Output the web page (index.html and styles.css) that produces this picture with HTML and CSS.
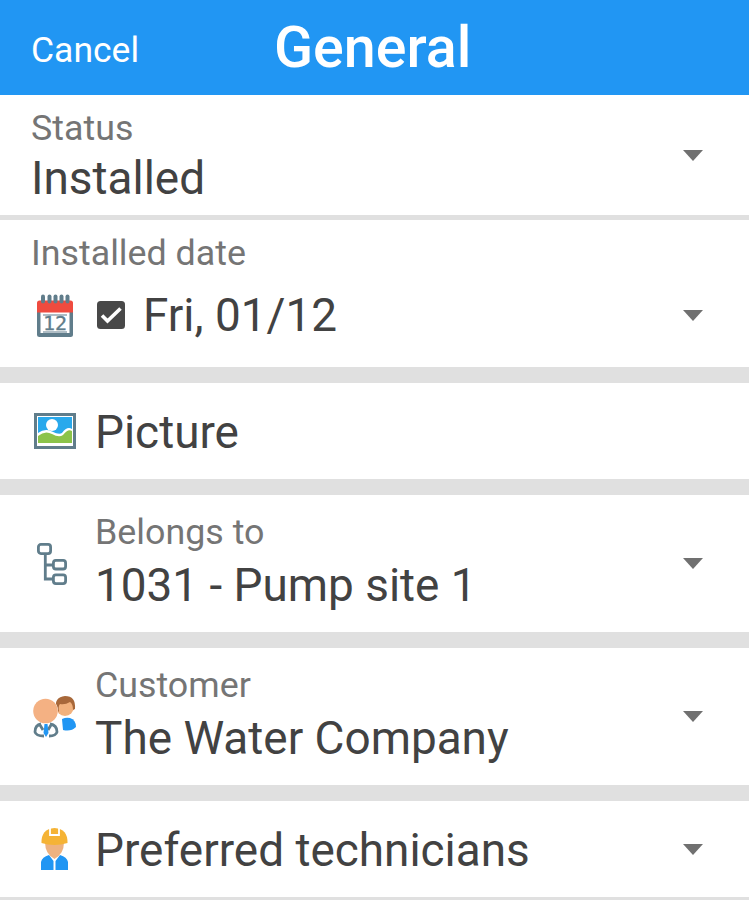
FILE: index.html
```html
<!DOCTYPE html>
<html lang="en">
<head>
<meta charset="utf-8">
<title>General</title>
<link rel="stylesheet" href="styles.css">
</head>
<body>
<header class="topbar">
  <span class="cancel">Cancel</span>
  <h1 class="title">General</h1>
</header>
<main class="form">
  <section class="row row-status">
    <div class="field">
      <div class="label">Status</div>
      <div class="value">Installed</div>
    </div>
    <span class="caret"></span>
  </section>
  <section class="row row-date">
    <div class="field">
      <div class="label">Installed date</div>
      <div class="date-line">
        <svg class="icon icon-cal" viewBox="0 0 36 43" width="36" height="43">
          <rect x="0" y="8" width="36" height="35" rx="2.500" fill="#607d8b"/>
          <rect x="3.500" y="18" width="29" height="21" fill="#fff"/>
          <path d="M0 18.500V9Q0 6.500 2.500 6.500H33.500Q36 6.500 36 9V18.500Z" fill="#ef4b3f"/>
          <g fill="#607d8b">
            <rect x="4" y="0.500" width="4" height="9" rx="2"/>
            <rect x="10.500" y="0.500" width="4" height="9" rx="2"/>
            <rect x="16.500" y="0.500" width="4" height="9" rx="2"/>
            <rect x="22.500" y="0.500" width="4" height="9" rx="2"/>
            <rect x="28.500" y="0.500" width="4" height="9" rx="2"/>
          </g>
          <path d="M6 21H30M6 38H30" stroke="#607d8b" stroke-width="1.200" fill="none"/>
          <text class="cal-num" x="18" y="36" text-anchor="middle">12</text>
        </svg>
        <svg class="check" viewBox="0 0 28 28" width="28" height="28">
          <rect width="28" height="28" rx="3.500" fill="#484848"/>
          <path d="M5 14.500L10.500 20L23.500 7.500" stroke="#fff" stroke-width="3.600" fill="none"/>
        </svg>
        <span class="value">Fri, 01/12</span>
        <span class="caret"></span>
      </div>
    </div>
  </section>
  <section class="row row-picture">
    <svg class="icon" viewBox="0 0 42 36" width="42" height="36">
      <rect width="42" height="36" fill="#607d8b"/>
      <rect x="3" y="3" width="36" height="30" fill="#fff"/>
      <rect x="4" y="4" width="34" height="26" fill="#29a9ec"/>
      <circle cx="18" cy="12" r="6" fill="#fff"/>
      <path d="M4 20Q11 15 18 18.500T28 20Q33 13 38 16V32H4Z" fill="#fff"/>
      <path d="M4 23Q11 17 18 21T29 22Q34 15.500 38 18V30H4Z" fill="#8bc34a"/>
    </svg>
    <div class="value">Picture</div>
  </section>
  <section class="row row-belongs">
    <svg class="icon" viewBox="0 0 30 42" width="30" height="42">
      <g fill="none" stroke="#607d8b" stroke-width="2.800">
        <path d="M8.300 11V36H16M8.300 22H16"/>
        <rect x="1.400" y="1.400" width="12.200" height="9.200" rx="2.500"/>
        <rect x="16.400" y="17.400" width="12.200" height="8.600" rx="2.500"/>
        <rect x="16.400" y="31.800" width="12.200" height="8.800" rx="2.500"/>
      </g>
    </svg>
    <div class="field">
      <div class="label">Belongs to</div>
      <div class="value">1031 - Pump site 1</div>
    </div>
    <span class="caret"></span>
  </section>
  <section class="row row-customer">
    <svg class="icon" viewBox="0 0 44 42" width="44" height="42">
      <path d="M29 23Q33 21 37 22Q43 24 43 31Q38 36 30 34Z" fill="#2196f3"/>
      <circle cx="32" cy="11" r="9" fill="#f2b27e"/>
      <path d="M23 13Q21 1 32 0Q43 0 42 13L40 14Q40 8 37 6Q32 9 27 8Q25 10 26 16Z" fill="#a8683a"/>
      <circle cx="12" cy="15" r="13" fill="#fff"/>
      <circle cx="12.500" cy="15" r="12.300" fill="#f4b183"/>
      <path d="M8 28Q2 29 2 36Q3 40 11 40M17 28Q24 29 24 36Q23 40 16 40M7 29L10 34M18 29L15 34" fill="none" stroke="#607d8b" stroke-width="2.800"/>
      <path d="M11.500 28H14.500L15.500 37L13 41L10.500 37Z" fill="#2196f3"/>
    </svg>
    <div class="field">
      <div class="label">Customer</div>
      <div class="value">The Water Company</div>
    </div>
    <span class="caret"></span>
  </section>
  <section class="row row-tech">
    <svg class="icon" viewBox="0 0 28 42" width="28" height="42">
      <path d="M0 42V34Q1 29 8 27L12.500 33V42ZM27 42V34Q26 29 19 27L14.500 33V42Z" fill="#2196f3"/>
      <path d="M4 14H23Q23 26 13.500 31Q4 26 4 14Z" fill="#eeb27f"/>
      <path d="M0.500 15Q0 1 13.500 0Q27 1 26.500 15Q13.500 19 0.500 15Z" fill="#f5b335"/>
      <path d="M9 0V7H18V0" stroke="#fff" stroke-width="1.800" fill="none"/>
    </svg>
    <div class="value">Preferred technicians</div>
    <span class="caret"></span>
  </section>
</main>
</body>
</html>
```

FILE: styles.css
```css
* { box-sizing: border-box; }
html, body { margin: 0; padding: 0; }
body {
  width: 749px;
  height: 900px;
  overflow: hidden;
  background: #e0e0e0;
  font-family: Roboto, sans-serif;
  color: #424242;
}
.topbar {
  height: 95px;
  background: #2196f3;
  color: #fff;
  display: flex;
  align-items: center;
  padding-left: 31px;
}
.cancel { font-size: 35.500px; width: 243px; padding-top: 4px; }
.title { margin: 0; font-size: 57.400px; font-weight: 500; line-height: 1; }
.form { display: flex; flex-direction: column; }
.row {
  background: #fff;
  display: flex;
  align-items: center;
  padding-left: 31px;
  padding-right: 46px;
}
.row-status { height: 120px; margin-bottom: 5px; }
.row-date { height: 147px; margin-bottom: 16px; align-items: flex-start; padding-top: 13px; }
.row-picture { height: 96px; margin-bottom: 16px; }
.row-belongs { height: 137px; margin-bottom: 16px; }
.row-customer { height: 137px; margin-bottom: 16px; }
.row-tech { height: 96px; }
.field { flex: 1; display: flex; flex-direction: column; }
.label { font-size: 35.800px; line-height: 40px; color: #757575; }
.value { font-size: 45.900px; line-height: 56px; }
.row-status .field { margin-top: 4px; }
.row-status .value { margin-top: 2px; }
.row-belongs .field, .row-customer .field { margin-top: -3px; }
.row-belongs .value, .row-customer .value { margin-top: 5px; }
.row-picture .value, .row-tech .value { margin-top: 2px; }
.date-line { display: flex; align-items: center; margin-top: 14px; }
.date-line .caret { margin-left: auto; }
.icon { flex: none; }
.icon-cal { margin-left: 6px; margin-right: 24px; }
.cal-num { font-family: "DejaVu Sans Mono", monospace; font-size: 20px; fill: #607d8b; stroke: #607d8b; stroke-width: 0.300px; }
.check { flex: none; margin-right: 18px; }
.row-picture .icon { margin-left: 3px; margin-right: 19px; }
.row-belongs .icon { margin-left: 6px; margin-right: 28px; }
.row-customer .icon { margin-left: 2px; margin-right: 18px; }
.row-tech .icon { margin-left: 10px; margin-right: 26px; }
.row-tech .value { flex: 1; }
.caret {
  flex: none;
  width: 0;
  height: 0;
  margin-top: 0;
  border-left: 10.500px solid transparent;
  border-right: 10.500px solid transparent;
  border-top: 11px solid #707070;
}
```
